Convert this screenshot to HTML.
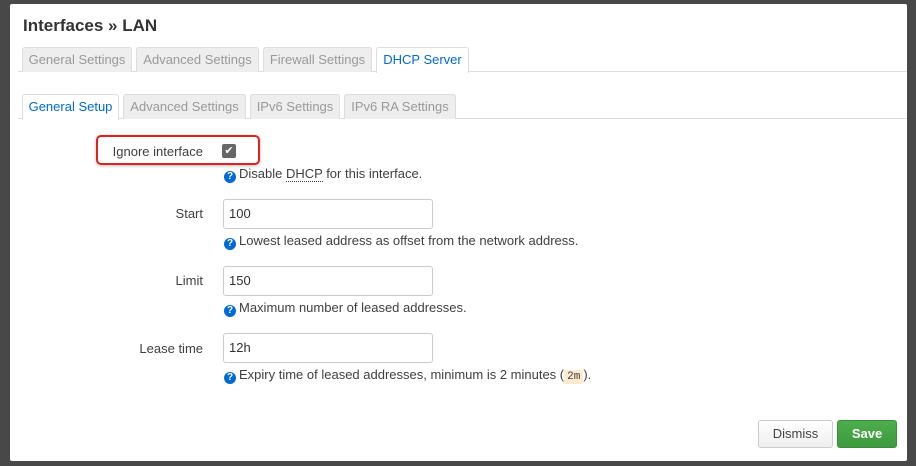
<!DOCTYPE html>
<html><head><style>
*{box-sizing:border-box}
body{margin:0;width:916px;height:466px;background:#484848;font-family:"Liberation Sans",sans-serif;font-size:13px;color:#404040;position:relative;overflow:hidden}
.modal{position:absolute;left:10px;top:4px;width:897px;height:457px;background:#fff;border-radius:2px}
h3{position:absolute;left:13px;top:12px;margin:0;font-size:17px;font-weight:bold;color:#333}
.tabs{position:absolute;left:8px;right:0;height:25px;border-bottom:1px solid #ddd}
.tab{position:absolute;top:0;height:25px;background:#eee;border:1px solid #ddd;border-bottom:none;color:#999;font-size:13px;line-height:24px;padding:0;text-align:center;white-space:nowrap;border-radius:3px 3px 0 0}
.tab.a{background:#fff;color:#0069d6;height:26px}
.lbl{position:absolute;right:704px;font-size:13px;color:#404040;text-align:right;white-space:nowrap}
.inp{position:absolute;left:213px;width:210px;height:30px;border:1px solid #ccc;border-radius:3px;padding:0 5px;line-height:28px;font-size:13px;color:#333}
.help{position:absolute;left:214px;font-size:13px;color:#404040;white-space:nowrap}
.q{display:inline-block;width:12px;height:12px;border-radius:50%;background:#0069d6;color:#fff;font-size:10px;font-weight:bold;text-align:center;line-height:12px;vertical-align:-1px;margin-right:3px}
code{font-family:"Liberation Mono",monospace;background:#fdebd0;font-size:11px;padding:1px 3px;border-radius:2px}
.btn{position:absolute;top:416px;height:28px;border-radius:3px;font-size:13px;line-height:26px;text-align:center}
</style></head><body>
<div class="modal">
<h3>Interfaces » LAN</h3>
<div class="tabs" style="top:43px">
<div class="tab" style="left:4px;width:110px">General Settings</div>
<div class="tab" style="left:118px;width:123px">Advanced Settings</div>
<div class="tab" style="left:245px;width:109px">Firewall Settings</div>
<div class="tab a" style="left:358px;width:93px">DHCP Server</div>
</div>
<div class="tabs" style="top:90px">
<div class="tab a" style="left:4px;width:97px">General Setup</div>
<div class="tab" style="left:105px;width:123px">Advanced Settings</div>
<div class="tab" style="left:232px;width:90px">IPv6 Settings</div>
<div class="tab" style="left:326px;width:112px">IPv6 RA Settings</div>
</div>
<div style="position:absolute;left:86px;top:131px;width:164px;height:30px;border:2px solid #e0201e;border-radius:5px;box-shadow:0 1px 3px rgba(0,0,0,.25)"></div>
<div class="lbl" style="top:140px">Ignore interface</div>
<div style="position:absolute;left:212px;top:140px;width:14px;height:14px;background:#666;border-radius:2px;color:#fff;font-size:11px;line-height:14px;text-align:center">✔</div>
<div class="help" style="top:162px"><span class="q">?</span>Disable <span style="border-bottom:1px dotted #404040">DHCP</span> for this interface.</div>

<div class="lbl" style="top:202px">Start</div>
<div class="inp" style="top:195px">100</div>
<div class="help" style="top:229px"><span class="q">?</span>Lowest leased address as offset from the network address.</div>

<div class="lbl" style="top:269px">Limit</div>
<div class="inp" style="top:262px">150</div>
<div class="help" style="top:296px"><span class="q">?</span>Maximum number of leased addresses.</div>

<div class="lbl" style="top:337px">Lease time</div>
<div class="inp" style="top:329px">12h</div>
<div class="help" style="top:363px"><span class="q">?</span>Expiry time of leased addresses, minimum is 2 minutes (<code>2m</code>).</div>

<div class="btn" style="left:748px;width:75px;border:1px solid #ccc;background:linear-gradient(#fff,#eee);color:#444">Dismiss</div>
<div class="btn" style="left:827px;width:60px;border:1px solid #3d8b3d;background:linear-gradient(#4cae4c,#3e9a3e);color:#fff;font-weight:bold">Save</div>
</div>
</body></html>
